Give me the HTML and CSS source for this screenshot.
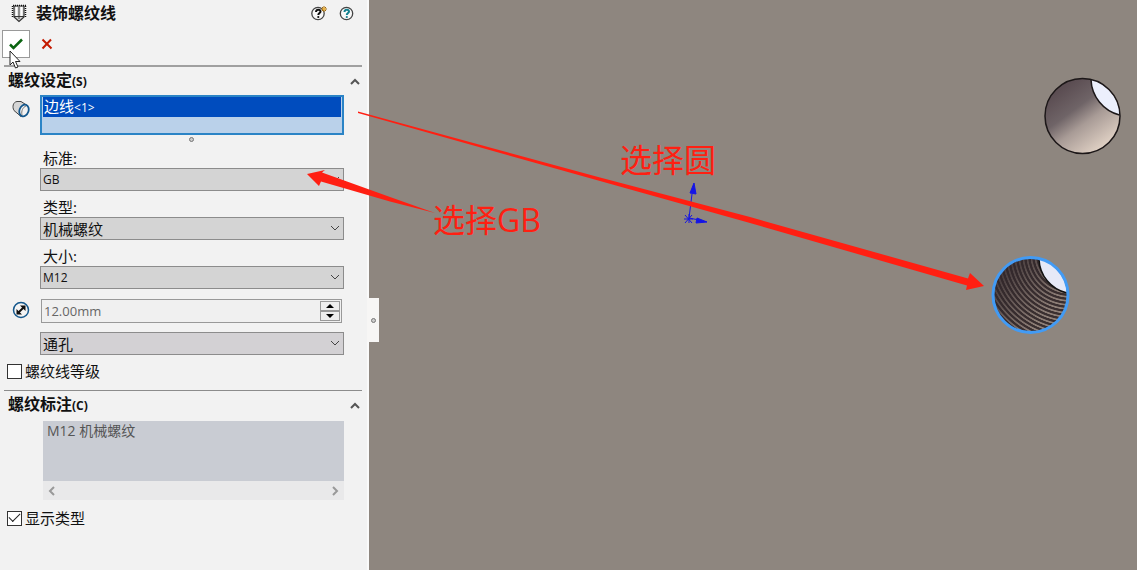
FILE: index.html
```html
<!DOCTYPE html>
<html lang="zh-CN">
  <head>
    <meta charset="UTF-8" />
    <meta name="viewport" content="width=device-width, initial-scale=1.0" />
    <title>装饰螺纹线</title>
    <link rel="stylesheet" href="styles.css">
  </head>
  <body>
    <form class="panel">
      <header class="panel-title">
        <svg class="thread-icon" width="16" height="20" viewBox="0 0 16 20">
          <path d="M3 3v11l5 4.500 5-4.500V3z" fill="#d0d0d0" stroke="#333" stroke-width="1.200" />
          <path d="M5.500 4v10M10.500 4v10" stroke="#fff" stroke-width="2" />
          <path d="M8 4v12" stroke="#777" stroke-width="1.500" />
          <path d="M3 13.500h10" stroke="#333" />
          <path d="M1.500 3v11M14.500 3v11M2 2.500h13" stroke="#111" stroke-width="1.500" stroke-dasharray="1 1" />
        </svg>
        <h1>装饰螺纹线</h1>
        <button type="button" class="icon-btn" aria-label="新功能">
          <svg width="18" height="16" viewBox="0 0 18 16" fill="none">
            <circle cx="8" cy="8.500" r="6.200" fill="#f8f8f8" stroke="#444" stroke-width="1.300" />
            <path d="M6 7c0-3 4.500-3 4.500-.500C10.500 8 8.300 8 8.300 10" stroke="#111" stroke-width="2" />
            <circle cx="8.300" cy="12" r="1.100" fill="#111" />
            <path d="M14 1v6M11 4h6M12 2l4 4M16 2l-4 4" stroke="#a06a10" />
            <circle cx="14" cy="4" r="1.500" fill="#f0b43c" />
          </svg>
        </button>
        <button type="button" class="icon-btn" aria-label="帮助">
          <svg width="18" height="16" viewBox="0 0 18 16" fill="none">
            <circle cx="8.500" cy="8.500" r="6.200" fill="#f8f8f8" stroke="#444" stroke-width="1.300" />
            <path d="M6.500 7c0-3 4.500-3 4.500-.500C11 8 8.800 8 8.800 10" stroke="#14808f" stroke-width="2" />
            <circle cx="8.800" cy="12" r="1.100" fill="#14808f" />
          </svg>
        </button>
      </header>

      <div class="confirm">
        <button type="button" class="btn-ok" aria-label="确定">
          <svg width="14" height="12" viewBox="0 0 14 12">
            <path d="M1 6.500l3.500 3.500L13 1.500" fill="none" stroke="#0a6410" stroke-width="2.500" />
          </svg>
        </button>
        <button type="button" class="btn-cancel" aria-label="取消">
          <svg width="12" height="12" viewBox="0 0 12 12">
            <path d="M1.500 1.500l9 9M10 1.500l-8.500 9" fill="none" stroke="#c41a00" stroke-width="2" />
          </svg>
        </button>
        <svg class="cursor" width="13" height="19" viewBox="0 0 13 19">
          <path d="M1 1v14l3-3 2.500 6 2.500-1-2.500-5.500H11z" fill="#fff" stroke="#222" />
        </svg>
      </div>

      <section class="group settings">
        <button type="button" class="group-head">
          <span class="name">螺纹设定<small>(S)</small></span>
          <svg width="10" height="7" viewBox="0 0 10 7"><path d="M1 6l4-4 4 4" /></svg>
        </button>

        <div class="row">
          <svg class="row-icon" width="18" height="18" viewBox="0 0 18 18">
            <path d="M5 1.500C1 2 0 7 2 10.500l7 6L14.500 5 9 1.500z" fill="#d6d6d6" stroke="#444" />
            <ellipse cx="12" cy="10.500" rx="4.500" ry="6" transform="rotate(20 12 10.500)" fill="#f2f2f2" stroke="#14578c" stroke-width="1.800" />
            <path d="M14 6c-3 1-5 5-4 9" fill="none" stroke="#777" />
          </svg>
          <ul class="pick-list" role="listbox" aria-label="圆形边线">
            <li role="option" aria-selected="true">边线<small>&lt;1&gt;</small></li>
          </ul>
        </div>
        <div class="grip"></div>

        <div class="field">
          <label for="standard">标准:</label>
          <div class="drop">
            <select id="standard" class="latin"><option>GB</option></select>
            <svg width="10" height="6" viewBox="0 0 10 6"><path d="M1 1l4 4 4-4" /></svg>
          </div>
        </div>
        <div class="field">
          <label for="type">类型:</label>
          <div class="drop">
            <select id="type"><option>机械螺纹</option></select>
            <svg width="10" height="6" viewBox="0 0 10 6"><path d="M1 1l4 4 4-4" /></svg>
          </div>
        </div>
        <div class="field">
          <label for="size">大小:</label>
          <div class="drop">
            <select id="size" class="latin"><option>M12</option></select>
            <svg width="10" height="6" viewBox="0 0 10 6"><path d="M1 1l4 4 4-4" /></svg>
          </div>
        </div>

        <div class="row diameter">
          <svg class="row-icon" width="18" height="18" viewBox="0 0 18 18">
            <circle cx="9" cy="9" r="7.500" fill="#f4f4f4" stroke="#14578c" stroke-width="1.500" />
            <path d="M6 12l6-6" stroke="#111" stroke-width="2" />
            <path d="M8 4.500h5.500V10zM4.500 8v5.500H10z" fill="#111" />
          </svg>
          <div class="spinner">
            <input type="text" value="12.00mm" aria-label="次要直径" disabled />
            <div class="spin-btns">
              <button type="button" aria-label="增加"><svg width="8" height="4" viewBox="0 0 8 4"><path d="M0 4l4-4 4 4z" /></svg></button>
              <button type="button" aria-label="减少"><svg width="8" height="4" viewBox="0 0 8 4"><path d="M0 0l4 4 4-4z" /></svg></button>
            </div>
          </div>
        </div>

        <div class="field depth">
          <div class="drop">
            <select aria-label="终止条件"><option>通孔</option></select>
            <svg width="10" height="6" viewBox="0 0 10 6"><path d="M1 1l4 4 4-4" /></svg>
          </div>
        </div>

        <label class="check"><input type="checkbox" />螺纹线等级</label>
      </section>

      <section class="group callout">
        <button type="button" class="group-head">
          <span class="name">螺纹标注<small>(C)</small></span>
          <svg width="10" height="7" viewBox="0 0 10 7"><path d="M1 6l4-4 4 4" /></svg>
        </button>
        <div class="note">
          <textarea aria-label="螺纹标注" disabled>M12 机械螺纹</textarea>
          <div class="scrollbar">
            <svg width="7" height="10" viewBox="0 0 7 10"><path d="M6 1L2 5l4 4" /></svg>
            <svg width="7" height="10" viewBox="0 0 7 10"><path d="M1 1l4 4-4 4" /></svg>
          </div>
        </div>
        <label class="check"><input type="checkbox" checked />显示类型</label>
      </section>

      <div class="splitter"><div class="dot"></div></div>
    </form>

    <main class="viewport"></main>

    <!-- model and annotations drawn over the page -->
    <svg class="scene" aria-hidden="true">
      <defs>
        <linearGradient id="bore" x1="0.200" y1="0.150" x2="0.750" y2="0.900">
          <stop offset="0" stop-color="#5b4d52" />
          <stop offset="0.350" stop-color="#6f6467" />
          <stop offset="0.600" stop-color="#a89b96" />
          <stop offset="1" stop-color="#dccdc1" />
        </linearGradient>
        <radialGradient id="threads" gradientUnits="userSpaceOnUse" cx="1070" cy="254" r="4" spreadMethod="repeat">
          <stop offset="0" stop-color="#3a2f30" />
          <stop offset="0.400" stop-color="#3a2f30" />
          <stop offset="0.600" stop-color="#8f8078" />
          <stop offset="0.850" stop-color="#8f8078" />
          <stop offset="1" stop-color="#3a2f30" />
        </radialGradient>
        <linearGradient id="shade" x1="0" y1="0.200" x2="0.700" y2="0.800">
          <stop offset="0" stop-color="#30262a" stop-opacity="0.850" />
          <stop offset="0.400" stop-color="#30262a" stop-opacity="0.500" />
          <stop offset="1" stop-color="#30262a" stop-opacity="0" />
        </linearGradient>
      </defs>

      <circle cx="1082.500" cy="116" r="37.500" fill="url(#bore)" />
      <path d="M1091 79.500A37.500 37.500 0 0 1 1119.500 115A38 38 0 0 1 1091 79.500z" fill="#eceffc" />
      <path d="M1119.500 115A38 38 0 0 1 1091 79.500" fill="none" stroke="#1c1718" stroke-width="1.500" />
      <circle cx="1082.500" cy="116" r="37.500" fill="none" stroke="#1c1718" stroke-width="1.500" />

      <circle cx="1030.500" cy="295" r="37" fill="url(#threads)" />
      <circle cx="1030.500" cy="295" r="37" fill="url(#shade)" />
      <path d="M1039 259A37 37 0 0 1 1067 293A36 36 0 0 1 1039 259z" fill="#e6e9f7" />
      <path d="M1067 293A36 36 0 0 1 1039 259" fill="none" stroke="#111" stroke-width="1.500" />
      <circle cx="1030.500" cy="295" r="37.500" fill="none" stroke="#429bf5" stroke-width="3" />

      <g stroke="#1414e6" fill="#1414e6">
        <path d="M689 218l3-24M689 218l10 2" fill="none" />
        <path d="M694 183l-4 10 6 1zM707 222l-10-4-1 5z" />
        <path d="M684 219h9M689 214v9M685 215l7 8M692 215l-7 8" fill="none" />
      </g>

      <g fill="#ff1f12">
        <path d="M358 111.500L600 177.500 750 217 968 278.500 970 273 984 286 966 290 967 285.500 750 223 600 181 358 113z" />
        <path d="M307 174L325 170 322 172.500 390 197 435 213 390 201.500 321 181.500 319 186z" />
      </g>
    </svg>
    <p class="mark mark-circle">选择圆</p>
    <p class="mark mark-gb">选择GB</p>
  </body>
</html>
```
FILE: styles.css
```css
* {
  box-sizing: border-box;
}

body {
  margin: 0;
  display: flex;
  min-height: 100vh;
  position: relative;
  overflow-x: hidden;
  font-family: "Open Sans", "Noto Sans CJK SC", sans-serif;
  font-size: 15px;
  line-height: 20px;
  color: #111;
}

button {
  padding: 0;
  border: none;
  background: none;
  font: inherit;
  color: inherit;
}

svg {
  display: block;
}

small {
  font-size: 12px;
}

/* property panel */
.panel {
  position: relative;
  flex: 0 0 369px;
  background-color: #f2f2f2;
  border-right: 2px solid #fafafa;
}

.panel-title {
  display: flex;
  align-items: center;
  height: 26px;
  padding: 0 11px;
}

.panel-title h1 {
  flex: 1;
  margin: 0 0 0 9px;
  font-size: 16px;
  line-height: 24px;
  font-weight: 700;
}

.icon-btn {
  margin-left: 10px;
}

.confirm {
  position: relative;
  display: flex;
  align-items: center;
  height: 39px;
  padding: 0 2px 3px;
}

.btn-ok {
  display: flex;
  align-items: center;
  justify-content: center;
  width: 28px;
  height: 28px;
  background-color: #fff;
  border: 1px solid #999;
}

.btn-cancel {
  margin-left: 11px;
}

.cursor {
  position: absolute;
  left: 9px;
  top: 24px;
}

.group {
  margin: 0 5px 0 4px;
  padding-left: 3px;
  border-top: 1px solid #8c8c8c;
}

.settings {
  border-top: 2px solid #a0a0a0;
}

.group-head {
  display: flex;
  align-items: center;
  justify-content: space-between;
  width: 100%;
  height: 28px;
  padding: 0 2px 0 1px;
  font-size: 16px;
  font-weight: 700;
}

.group-head path,
.drop path,
.scrollbar path {
  fill: none;
  stroke: #555;
  stroke-width: 2;
}

.row {
  display: flex;
  margin-right: 18px;
}

.row-icon {
  flex: none;
  margin: 5px 10px 0 5px;
}

.pick-list {
  flex: 1;
  height: 40px;
  margin: 0;
  padding: 0 1px;
  list-style: none;
  background-color: #bad1ea;
  border: 2px solid #2b84c6;
}

.pick-list li {
  height: 20px;
  padding-left: 1px;
  line-height: 18px;
  color: #fff;
  background-color: #004cbe;
}

.grip,
.dot {
  width: 5px;
  height: 5px;
  border: 1px solid #777;
  border-radius: 50%;
  background-color: #ccc;
}

.grip {
  margin: 2px 0 6px 182px;
}

.field {
  margin: 0 18px 6px 33px;
}

.field label {
  display: block;
  height: 20px;
  padding-left: 3px;
}

.drop {
  position: relative;
}

.drop select {
  display: block;
  width: 100%;
  height: 23px;
  padding: 0 2px;
  appearance: none;
  border: 1px solid #8c8c8c;
  border-radius: 0;
  background-color: #d4d4d4;
  font: inherit;
  color: inherit;
}

.drop select.latin {
  font-size: 12px;
}

.drop svg {
  position: absolute;
  right: 4px;
  top: 8px;
  pointer-events: none;
}

.drop path {
  stroke: #444;
  stroke-width: 1;
}

.diameter {
  margin-top: 10px;
  margin-right: 20px;
}

.diameter .row-icon {
  margin-top: 2px;
  margin-right: 11px;
}

.spinner {
  flex: 1;
  display: flex;
  height: 24px;
  padding: 1px;
  border: 1px solid #999;
  background-color: #f0f0f0;
}

.spinner input {
  flex: 1;
  min-width: 0;
  padding: 0 1px;
  border: none;
  background: none;
  font: inherit;
  font-size: 13px;
  line-height: 20px;
  color: #666;
}

.spin-btns {
  display: flex;
  flex-direction: column;
  width: 20px;
}

.spin-btns button {
  flex: 1;
  display: flex;
  align-items: center;
  justify-content: center;
  border: 1px solid #999;
  background-color: #eee;
}

.depth {
  margin-top: 9px;
}

.depth select {
  background-color: #d3d1d4;
}

.check {
  display: flex;
  align-items: center;
  width: max-content;
  height: 20px;
}

.check input {
  display: flex;
  align-items: center;
  justify-content: center;
  width: 15px;
  height: 15px;
  margin: 0 3px 0 0;
  appearance: none;
  border: 1px solid #333;
  background-color: #fff;
}

.check input:checked::after {
  content: "";
  width: 10px;
  height: 5px;
  margin-top: -4px;
  border-left: 1px solid #222;
  border-bottom: 1px solid #222;
  transform: rotate(-45deg);
}

.callout {
  margin-top: 9px;
}

.note {
  margin: 2px 18px 8px 36px;
}

.note textarea {
  display: block;
  width: 100%;
  height: 60px;
  padding: 0 4px;
  border: none;
  resize: none;
  overflow: hidden;
  background-color: #c9ccd3;
  font: inherit;
  font-size: 14px;
  color: #555;
}

.scrollbar {
  display: flex;
  align-items: center;
  justify-content: space-between;
  height: 19px;
  padding: 0 5px;
  background-color: #e9e9ea;
}

.scrollbar path {
  stroke: #999;
}

.splitter {
  position: absolute;
  top: 298px;
  right: -12px;
  display: flex;
  align-items: center;
  justify-content: center;
  width: 12px;
  height: 44px;
  background-color: #f7f6f5;
}

/* graphics area */
.viewport {
  flex: 1;
  background-color: #8e867f;
}

.scene {
  position: absolute;
  left: 0;
  top: 0;
  width: 100%;
  height: 100%;
  pointer-events: none;
}

.mark {
  position: absolute;
  margin: 0;
  font-size: 32px;
  line-height: 40px;
  color: #ff1f12;
}

.mark-circle {
  left: 620px;
  top: 140px;
}

.mark-gb {
  left: 433px;
  top: 200px;
}
```
